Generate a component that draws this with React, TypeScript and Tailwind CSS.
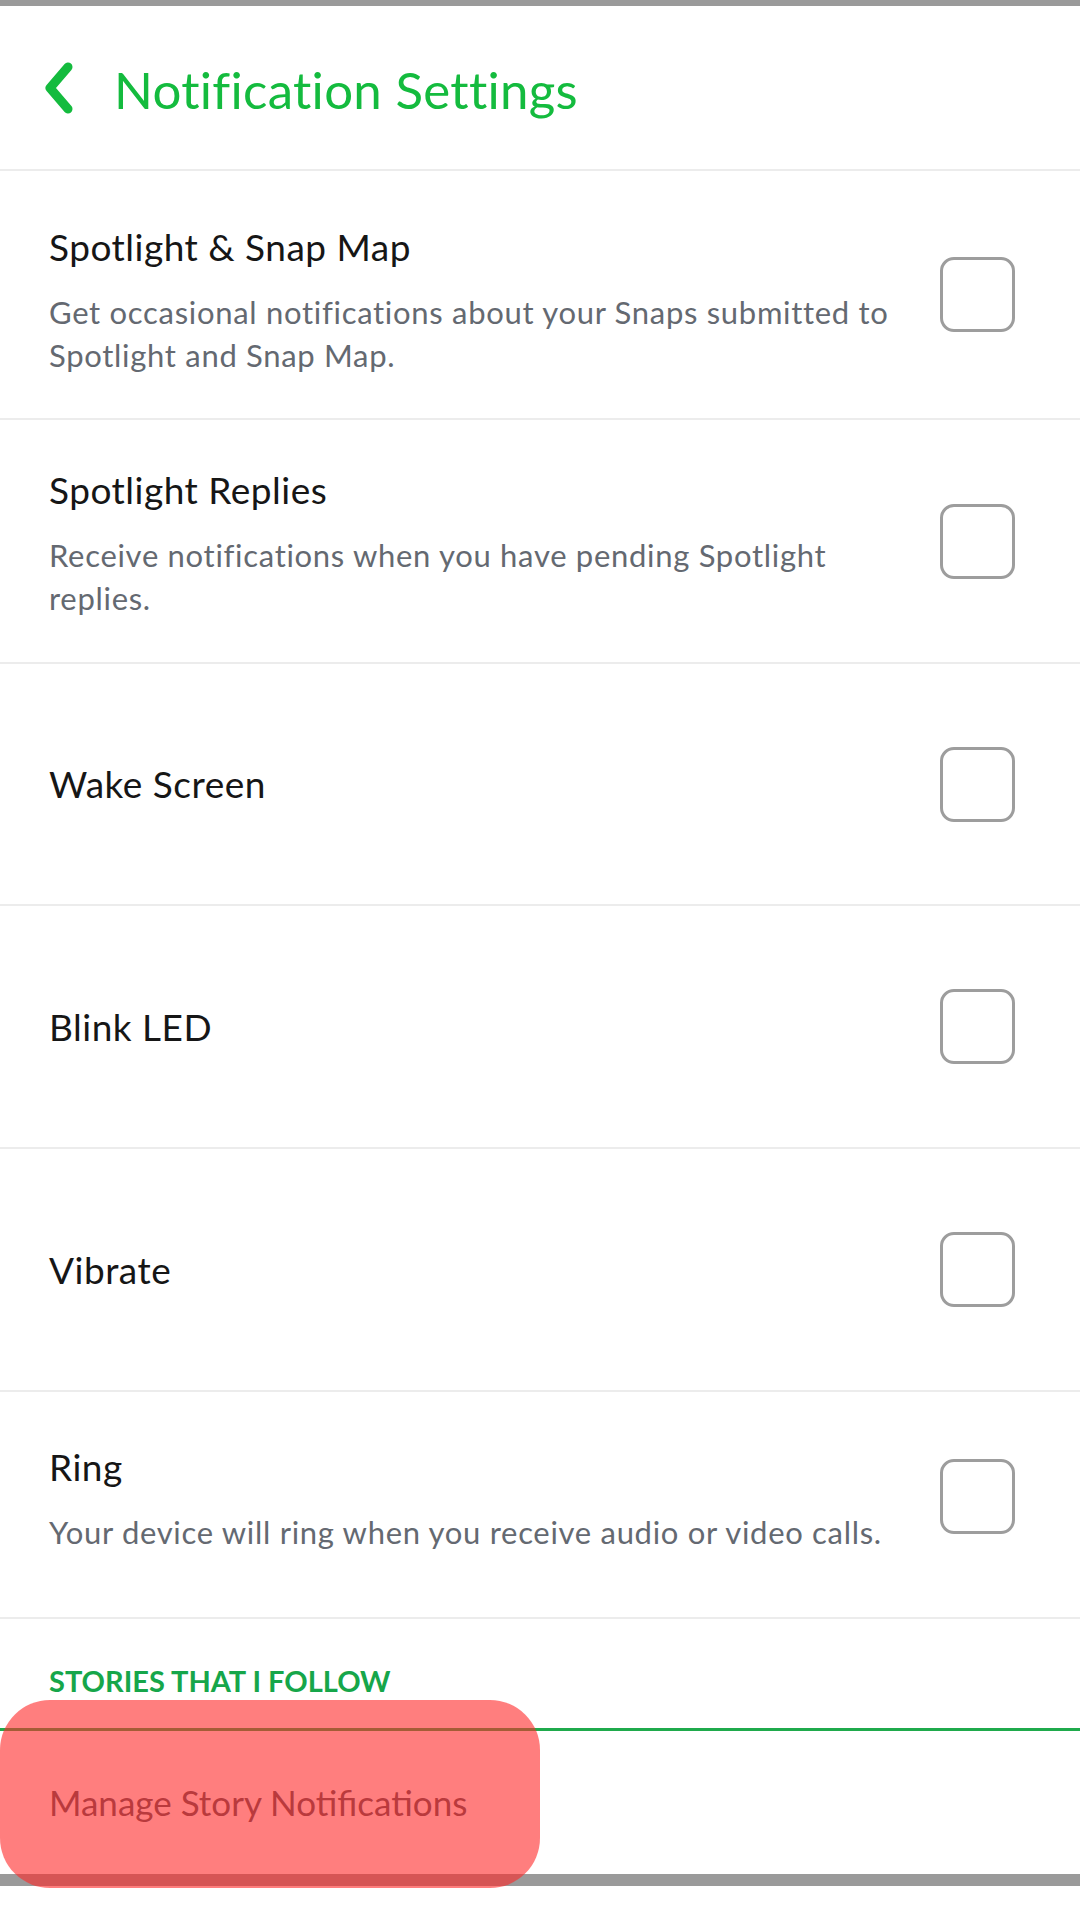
import React from "react";

const font = { fontFamily: "Lato, 'Noto Sans', sans-serif" };

function Checkbox({ className = "" }: { className?: string }) {
  return (
    <div
      className={`w-[75px] h-[75px] shrink-0 rounded-[14px] border-[3px] border-[#9d9d9d] bg-white ${className}`}
    />
  );
}

function Row({
  title,
  desc,
  h,
  pt,
  boxClass = "",
}: {
  title: string;
  desc?: string[];
  h: string;
  pt?: string;
  boxClass?: string;
}) {
  return (
    <div className={`flex ${h} border-b-2 border-[#ececec] pl-[49px] pr-[65px]`}>
      {desc ? (
        <div className={`flex-1 ${pt}`}>
          <div className="text-[37px] leading-[48px] tracking-[0.5px] text-[#161616]">{title}</div>
          <div className="mt-[20px] text-[31px] leading-[43px] tracking-[0.7px] text-[#646971]">
            {desc.map((d, i) => (
              <div key={i}>{d}</div>
            ))}
          </div>
        </div>
      ) : (
        <div className="flex-1 flex items-center">
          <div className="text-[37px] leading-[48px] tracking-[0.5px] text-[#161616]">{title}</div>
        </div>
      )}
      <div className={`flex items-center ${boxClass}`}>
        <Checkbox />
      </div>
    </div>
  );
}

export default function App() {
  return (
    <div className="relative w-[1080px] h-[1920px] bg-white overflow-hidden" style={font}>
      <div className="h-[6px] bg-[#9a9a9a]" />
      <div className="flex items-center h-[165px] border-b-2 border-[#ececec] pl-[42px]">
        <svg width="34" height="52" viewBox="0 0 34 52" className="shrink-0">
          <path
            d="M26 5 L8 26 L26 47"
            fill="none"
            stroke="#14bb3e"
            strokeWidth="9"
            strokeLinecap="round"
            strokeLinejoin="round"
          />
        </svg>
        <div className="ml-[38px] mt-[4px] text-[51px] leading-[60px] tracking-[0.3px] text-[#14bb3e]">
          Notification Settings
        </div>
      </div>

      <Row
        title="Spotlight & Snap Map"
        desc={["Get occasional notifications about your Snaps submitted to", "Spotlight and Snap Map."]}
        h="h-[249px]"
        pt="pt-[52px]"
      />
      <Row
        title="Spotlight Replies"
        desc={["Receive notifications when you have pending Spotlight", "replies."]}
        h="h-[244px]"
        pt="pt-[46px]"
      />
      <Row title="Wake Screen" h="h-[242px]" />
      <Row title="Blink LED" h="h-[243px]" />
      <Row title="Vibrate" h="h-[243px]" />
      <Row
        title="Ring"
        desc={["Your device will ring when you receive audio or video calls."]}
        h="h-[227px]"
        pt="pt-[51px]"
        boxClass="pb-[16px]"
      />

      <div className="h-[112px] border-b-[3px] border-[#1faa4c] pl-[49px] pt-[46px]">
        <div className="text-[29px] leading-[32px] font-bold text-[#16a64a]">STORIES THAT I FOLLOW</div>
      </div>
      <div className="h-[143px] flex items-center pl-[49px]">
        <div className="text-[35px] leading-[43px] text-[#50555c]">Manage Story Notifications</div>
      </div>
      <div className="h-[12px] bg-[#9a9a9a]" />

      <div className="absolute left-0 top-[1700px] w-[540px] h-[188px] rounded-[50px] bg-[rgba(255,40,40,0.6)]" />
    </div>
  );
}
